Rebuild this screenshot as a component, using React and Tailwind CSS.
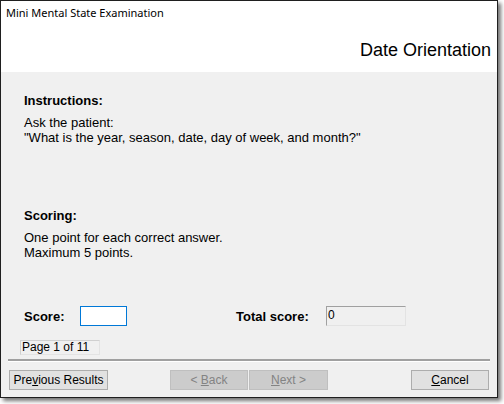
export default function App() {
  const btn =
    "h-[20px] border border-[#adadad] bg-[#e1e1e1] text-[12px] text-black flex items-center justify-center";
  const btnOff =
    "h-[20px] border border-[#bfbfbf] bg-[#cccccc] text-[12px] text-[#838383] flex items-center justify-center";

  return (
    <div className="w-[504px] h-[404px] bg-white font-['Liberation_Sans',Arial,sans-serif]">
      <div className="w-[498px] h-[398px] border border-[#1f1f1f] bg-[#f0f0f0] flex flex-col shadow-[3px_3px_4px_rgba(0,0,0,0.55)]">
        {/* header */}
        <div className="h-[71px] bg-white flex flex-col">
          <div className="pl-[5px] pt-[4px] text-[11px] leading-[16px] text-black font-['Noto_Sans','Open_Sans',sans-serif]">
            Mini Mental State Examination
          </div>
          <div className="mt-[19px] pr-[6px] text-right text-[18px] leading-[20px] text-black">
            Date Orientation
          </div>
        </div>

        {/* body */}
        <div className="flex-1 flex flex-col text-[13px] leading-[15px] text-black">
          <div className="pl-[23px] pt-[21px] font-bold">Instructions:</div>
          <div className="pl-[23px] mt-[7px]">
            <div>Ask the patient:</div>
            <div>"What is the year, season, date, day of week, and month?"</div>
          </div>

          <div className="pl-[23px] mt-[63px] font-bold">Scoring:</div>
          <div className="pl-[23px] mt-[7px]">
            <div>One point for each correct answer.</div>
            <div>Maximum 5 points.</div>
          </div>

          <div className="mt-[46px] flex items-center h-[20px]">
            <div className="pl-[23px] w-[79px] font-bold">Score:</div>
            <div className="w-[47px] h-[20px] border border-[#0078d7] bg-white" />
            <div className="ml-[109px] w-[90px] font-bold">Total score:</div>
            <div className="w-[80px] h-[20px] border border-[#a0a0a0] border-r-[#e3e3e3] border-b-[#e3e3e3] bg-[#f0f0f0] text-[12px] leading-[14px] pl-[1px] pt-[1px]">
              0
            </div>
          </div>

          <div className="mt-[14px] ml-[19px] w-[80px] h-[15px] border border-[#e3e3e3] border-t-[#d0d0d0] border-l-[#d0d0d0] text-[12px] leading-[13px] pl-[1px]">
            Page 1 of 11
          </div>

          <div className="mt-[4px] mx-[7px] h-[3px] border-t-2 border-[#a0a0a0] border-b border-b-white" />

          <div className="mt-[8px] flex items-center pl-[8px] pr-[8px]">
            <div className={`${btn} w-[99px]`}>
              <span>
                Pre<span className="underline">v</span>ious Results
              </span>
            </div>
            <div className={`${btnOff} w-[78px] ml-[62px]`}>
              <span>
                &lt; <span className="underline">B</span>ack
              </span>
            </div>
            <div className={`${btnOff} w-[79px] ml-[1px]`}>
              <span>
                <span className="underline">N</span>ext &gt;
              </span>
            </div>
            <div className={`${btn} w-[78px] ml-auto`}>
              <span>
                <span className="underline">C</span>ancel
              </span>
            </div>
          </div>
        </div>
      </div>
    </div>
  );
}
